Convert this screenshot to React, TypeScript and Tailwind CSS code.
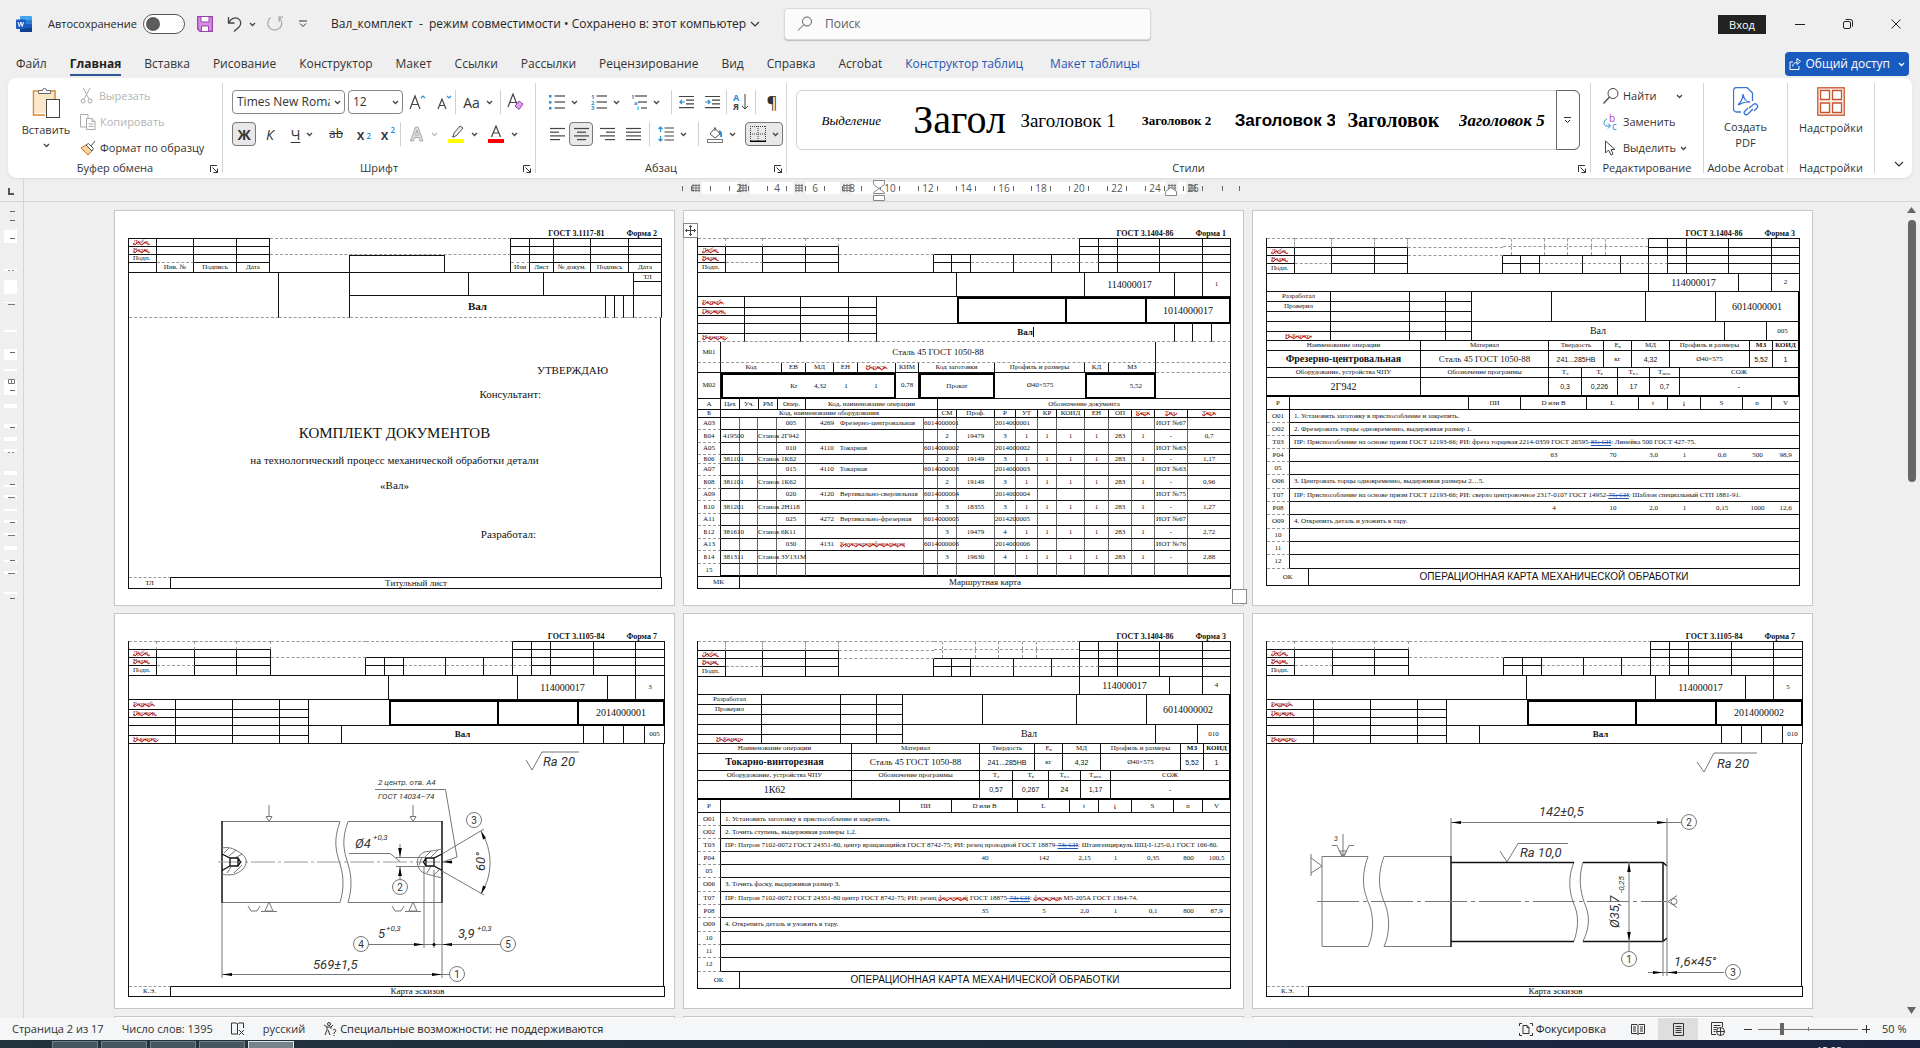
import React from 'react';
import clsx from 'clsx';

const UI = "font-['Open_Sans',sans-serif]";
const SERIF = "font-['Liberation_Serif',serif]";
const SANS = "font-['Liberation_Sans',sans-serif]";

/* ---------- small helpers ---------- */

function Svg({ w, h, children, className }: { w: number; h: number; children: React.ReactNode; className?: string }) {
  return (
    <svg width={w} height={h} viewBox={`0 0 ${w} ${h}`} fill="none" stroke="#444" strokeWidth="1" className={clsx('shrink-0', className)} aria-hidden="true">
      {children}
    </svg>
  );
}

function Chev({ color = '#444', className }: { color?: string; className?: string }) {
  return (
    <Svg w={7} h={5} className={className}>
      <path d="M1 1l2.5 2.5L6 1" stroke={color} strokeWidth="1.3" />
    </Svg>
  );
}

function Tool({ label, active, children, className }: { label: string; active?: boolean; children: React.ReactNode; className?: string }) {
  return (
    <button aria-label={label} className={clsx('flex h-6 items-center justify-center gap-1.5 rounded', active ? 'border border-[#777] bg-[#e8e8e8]' : '', className)}>
      {children}
    </button>
  );
}

const Sep = () => <span className="h-6 w-px shrink-0 bg-[#d0d0d0]" />;

/* ---------- title bar ---------- */

function TitleBar() {
  return (
    <header className="flex h-12 shrink-0 items-start text-[12px] text-[#262626]">
      <div className="flex h-12 w-[784px] items-center pl-4">
        <Svg w={16} h={16}>
          <rect x="4" y="0" width="12" height="16" rx="1" fill="#41a5ee" stroke="none" />
          <rect x="4" y="4" width="12" height="4" fill="#2b7cd3" stroke="none" />
          <rect x="4" y="8" width="12" height="4" fill="#185abd" stroke="none" />
          <rect x="4" y="12" width="12" height="4" fill="#103f91" stroke="none" />
          <rect x="0" y="3.5" width="9.5" height="9.5" rx="1" fill="#185abd" stroke="none" />
          <path d="M2 6l1.3 4.5L4.8 6l1.4 4.5L7.500 6" stroke="#fff" strokeWidth="1" />
        </Svg>
        <label htmlFor="autosave" className="ml-4 w-[95px] text-[11px]">Автосохранение</label>
        <span className="relative h-5 w-[42px]">
          <input id="autosave" type="checkbox" className="h-5 w-[42px] appearance-none rounded-full border border-[#555] bg-white" />
          <span className="absolute left-[3px] top-[3px] h-3.5 w-3.5 rounded-full bg-[#5c5c5c]" />
        </span>
        <button aria-label="Сохранить" className="ml-3">
          <Svg w={16} h={16}>
            <path d="M.7 .7h14.600v14.600H3L.7 13z" fill="#d58fe0" stroke="#9b3fae" strokeWidth="1.3" />
            <path d="M4 1v5h8V1M4.500 15v-5h7v5" fill="#fff" stroke="#9b3fae" />
          </Svg>
        </button>
        <button aria-label="Отменить" className="ml-3.5 flex items-center gap-1.5">
          <Svg w={16} h={16}>
            <path d="M1.500 1v6h6M1.800 6.500C4 2.500 8 1 11 2.500c3.500 2 3.500 6 1 8.500l-5 4.500" stroke="#444" strokeWidth="1.300" />
          </Svg>
          <Chev />
        </button>
        <button aria-label="Вернуть" className="ml-2.5">
          <Svg w={17} h={16}>
            <path d="M4.500 1.500a7 7 0 1 0 8.500 0M13 6V1.200h4" stroke="#a8a8a8" strokeWidth="1.200" />
          </Svg>
        </button>
        <button aria-label="Настройка панели быстрого доступа" className="ml-4">
          <Svg w={8} h={8}>
            <path d="M0 1h8M1 3.500l3 3 3-3" stroke="#333" />
          </Svg>
        </button>
        <button className="ml-6 flex items-center gap-1 whitespace-pre">
          <span>Вал_комплект  -  режим совместимости • Сохранено в: этот компьютер</span>
          <Svg w={10} h={6}>
            <path d="M1 1l4 4 4-4" stroke="#333" strokeWidth="1.2" />
          </Svg>
        </button>
      </div>
      <label className="mt-2 flex h-8 w-[367px] items-center rounded border border-[#d9d9d9] bg-[#fbfbfb] pl-3 shadow-[0_1px_1px_#bbb]">
        <Svg w={16} h={16}>
          <circle cx="10" cy="5.500" r="4.500" stroke="#555" />
          <path d="M6.800 8.700L1 14.500" stroke="#555" />
        </Svg>
        <input aria-label="Поиск" placeholder="Поиск" className="ml-3 w-full bg-transparent text-[12px] outline-none placeholder:text-[#616161]" />
      </label>
      <div className="ml-auto flex h-12 items-center pr-[19px]">
        <button className="mr-[29px] h-[19px] w-12 bg-[#222] text-[11px] leading-none text-white">Вход</button>
        <button aria-label="Свернуть" className="mr-[38px]"><Svg w={10} h={10}><path d="M0 5.500h10" stroke="#222" /></Svg></button>
        <button aria-label="Восстановить" className="mr-[38px]">
          <Svg w={10} h={10}><rect x=".5" y="2.500" width="7" height="7" rx="1.500" stroke="#222" /><path d="M2.500 .5h5a2 2 0 0 1 2 2v5" stroke="#222" /></Svg>
        </button>
        <button aria-label="Закрыть"><Svg w={10} h={10}><path d="M.5 .5l9 9M9.500 .5l-9 9" stroke="#222" /></Svg></button>
      </div>
    </header>
  );
}

const tabs = ['Файл', 'Главная', 'Вставка', 'Рисование', 'Конструктор', 'Макет', 'Ссылки', 'Рассылки', 'Рецензирование', 'Вид', 'Справка', 'Acrobat'];

function Tabs() {
  return (
    <nav className="flex h-[30px] shrink-0 items-center gap-[23px] pl-4 pr-[11px] pt-0.5 text-[12px] text-[#333]">
      {tabs.map(t => (
        <a key={t} href="#" className={clsx('flex h-6 items-center whitespace-nowrap', t === 'Главная' && 'border-b-2 border-[#2b579a] pt-0.5 font-bold text-[#222]')}>{t}</a>
      ))}
      <a href="#" className="text-[#1f56b3]">Конструктор таблиц</a>
      <a href="#" className="ml-1 text-[#1f56b3]">Макет таблицы</a>
      <button className="ml-auto flex h-6 items-center gap-1 rounded bg-[#185abd] px-1 text-[12px] text-white">
        <Svg w={12} h={12}>
          <path d="M4 4H1v7.500h9V8M3.500 8.500C4 5.500 6 4.500 8 4.500V6.500l3.500-3.200L8 .5v4" stroke="#fff" />
        </Svg>
        Общий доступ
        <Chev color="#fff" className="ml-1" />
      </button>
    </nav>
  );
}

/* ---------- ribbon ---------- */

function Launcher() {
  return (
    <button aria-label="Параметры" className="absolute bottom-0 right-1">
      <Svg w={8} h={8}><path d="M.5 7V.5H7M2.500 2.500l5 5M7.500 3.500v4h-4" stroke="#333" /></Svg>
    </button>
  );
}

function Group({ label, className, launcher, children }: { label: string; className: string; launcher?: boolean; children: React.ReactNode }) {
  return (
    <section className={clsx('relative my-[5px] flex shrink-0 flex-col border-r border-[#d4d4d4]', className)}>
      <div className="min-h-0 flex-1">{children}</div>
      <div className="relative h-3 whitespace-nowrap text-center text-[11px] leading-[14px] text-[#333]">
        {label}
        {launcher && <Launcher />}
      </div>
    </section>
  );
}

function Lines({ rows }: { rows: [number, number][] }) {
  return (
    <Svg w={15} h={14}>
      {rows.map(([a, b], i) => <path key={i} d={`M${a} ${1.5 + i * 3.7}H${b}`} stroke="#444" strokeWidth="1.2" />)}
    </Svg>
  );
}

function ListIcon({ kind }: { kind: 'dot' | 'num' | 'multi' }) {
  const blue = '#2a8dd4';
  return (
    <Svg w={16} h={16}>
      {kind === 'dot' && [2, 8, 14].map(y => <rect key={y} x="0" y={y - 1} width="2.500" height="2.500" fill={blue} stroke="none" />)}
      {kind !== 'dot' && ['1', kind === 'num' ? '2' : 'a', kind === 'num' ? '3' : 'i'].map((t, i) => (
        <text key={t} x={kind === 'multi' ? i * 3 : 0} y={5 + i * 5.5} fontSize="6" fontWeight="bold" fill={blue} stroke="none">{t}</text>
      ))}
      {[2, 8, 14].map((y, i) => <path key={y} d={`M${kind === 'multi' ? 4 + i * 3 : 5.5} ${y}H16`} stroke="#444" strokeWidth="1.200" />)}
    </Svg>
  );
}

const styles = [
  { t: 'Выделение', c: 'text-[13px] italic justify-center' },
  { t: 'Загол', c: 'text-[40px] justify-center' },
  { t: 'Заголовок 1', c: 'text-[19px] justify-center' },
  { t: 'Заголовок 2', c: 'text-[13px] font-bold justify-center' },
  { t: 'Заголовок 3', c: "text-[17px] font-bold font-['Liberation_Sans',sans-serif]" },
  { t: 'Заголовок', c: 'text-[20px] font-bold justify-center' },
  { t: 'Заголовок 5', c: 'text-[17px] font-bold italic justify-center' },
];

function Ribbon() {
  return (
    <div className="mx-2 flex h-[100px] shrink-0 rounded-lg bg-white text-[11px] text-[#333] shadow-[0_1px_2px_#d8d8d8]">
      <Group label="Буфер обмена" launcher className="w-[215px]">
        <div className="flex">
          <button className="ml-3 mt-1 flex w-[52px] flex-col items-center">
            <Svg w={29} h={31}>
              <path d="M6 4H1.500v24H13M18 4h5v8" stroke="#d9882b" strokeWidth="1.500" fill="none" />
              <path d="M3 5.500h19V12h-8v14H3z" fill="#fbe7c8" stroke="none" />
              <path d="M6.500 6.500v-3h4a2 2 0 0 1 4 0h4v3z" fill="#fff" stroke="#666" />
              <rect x="14.500" y="12.500" width="13" height="18" fill="#fff" stroke="#444" />
            </Svg>
            <span className="mt-1">Вставить</span>
            <Chev className="mt-1" />
          </button>
          <div className="ml-2 flex flex-col">
            <button disabled className="flex h-[26px] items-center gap-1.5 text-[#b5b5b5]">
              <Svg w={13} h={16}>
                <path d="M3 0l6 11M10 0L4 11" stroke="#aaa" />
                <circle cx="3" cy="13" r="2" stroke="#aaa" />
                <circle cx="10" cy="13" r="2" stroke="#aaa" />
              </Svg>
              Вырезать
            </button>
            <button disabled className="flex h-[26px] items-center gap-1 text-[#b5b5b5]">
              <Svg w={16} h={16}>
                <path d="M6 13H.5V.5H8V4M6.500 4.500H12l3 3v8H6.500zM12 4.500v3h3M8.500 10h5M8.500 12.500h5" stroke="#aaa" />
              </Svg>
              Копировать
            </button>
            <button className="flex h-[26px] items-center gap-1 whitespace-nowrap">
              <Svg w={16} h={16}>
                <path d="M1 8l5-3 6 6-4 4z" fill="#f9d39a" stroke="#d9771f" />
                <path d="M6 5l6 6 1.500-2.500L8.500 3.500zM11 6l4-5" stroke="#555" fill="#fff" />
              </Svg>
              Формат по образцу
            </button>
          </div>
        </div>
      </Group>

      <Group label="Шрифт" launcher className="w-[313px]">
        <div className="flex flex-col gap-2 pl-[9px] pt-[7px]">
          <div className="flex h-6 items-center">
            <span className="relative flex items-center">
              <select aria-label="Шрифт" className="h-6 w-[113px] appearance-none rounded border border-[#888] bg-white pl-1 pr-3.5 text-[12px]">
                <option>Times New Roman</option>
              </select>
              <Chev className="pointer-events-none absolute right-1" />
            </span>
            <span className="relative ml-[3px] flex items-center">
              <select aria-label="Размер шрифта" className="h-6 w-[55px] appearance-none rounded border border-[#888] bg-white pl-1 text-[12px]">
                <option>12</option>
              </select>
              <Chev className="pointer-events-none absolute right-1" />
            </span>
            <Tool label="Увеличить размер" className="ml-1.5 w-[18px]">
              <Svg w={18} h={18}><path d="M1 16L6 3l5 13M3 11.500h6.500" strokeWidth="1.200" /><path d="M12 5l2-2 2 2" stroke="#2a8dd4" strokeWidth="1.200" /></Svg>
            </Tool>
            <Tool label="Уменьшить размер" className="ml-2.5 w-[18px]">
              <Svg w={18} h={18}><path d="M1 16L5 6l4 10M2.500 12.500h5" strokeWidth="1.200" /><path d="M10 3l2 2 2-2" stroke="#2a8dd4" strokeWidth="1.200" /></Svg>
            </Tool>
            <Sep />
            <Tool label="Регистр" className="mx-1.5 w-8 text-[14px]">Aa<Chev /></Tool>
            <Sep />
            <Tool label="Очистить формат" className="ml-1.5 w-4">
              <Svg w={17} h={18}><path d="M1 14L6 1l5 13M3 9.500h6" strokeWidth="1.200" /><path d="M8 13l4-5 4 3-4 5.500z" fill="#dca5e5" stroke="#9b3fae" /></Svg>
            </Tool>
          </div>
          <div className="flex h-6 items-center text-[14px]">
            <Tool label="Полужирный" active className="w-6 font-bold">Ж</Tool>
            <Tool label="Курсив" className="ml-1 w-5 italic">К</Tool>
            <Tool label="Подчёркнутый" className="ml-1.5 w-8"><span className="underline underline-offset-2">Ч</span><Chev /></Tool>
            <Tool label="Зачёркнутый" className="ml-1.5 w-6 text-[12px] line-through">ab</Tool>
            <Tool label="Подстрочный" className="ml-1 w-6 font-semibold">x<sub className="-ml-1 text-[8px] text-[#2a8dd4]">2</sub></Tool>
            <Tool label="Надстрочный" className="w-6 font-semibold">x<sup className="-ml-1 text-[8px] text-[#2a8dd4]">2</sup></Tool>
            <Sep />
            <Tool label="Текстовые эффекты" className="ml-1.5 w-8">
              <Svg w={16} h={16}><path d="M1.500 15L6.500 1h2.500l5 14h-3l-1-3.500H5.500l-1 3.500zM6.500 9h3L8 4z" fill="#ddd" stroke="#aaa" /></Svg>
              <Chev color="#bbb" />
            </Tool>
            <Tool label="Цвет выделения" className="ml-2 w-8">
              <Svg w={17} h={18}><path d="M5 12l1-4 6-7 3 2-6 7-3 2zM4 12l2-2" stroke="#555" fill="#eee" /><rect x="0" y="14" width="16" height="4" fill="#ff0" stroke="none" /></Svg>
              <Chev />
            </Tool>
            <Tool label="Цвет текста" className="ml-2 w-8">
              <Svg w={17} h={18}><path d="M3.500 12l4.500-11 4.500 11M5 8h6" strokeWidth="1.200" /><rect x="0" y="14" width="16" height="4" fill="#f00" stroke="none" /></Svg>
              <Chev />
            </Tool>
          </div>
        </div>
      </Group>

      <Group label="Абзац" launcher className="w-[251px]">
        <div className="flex flex-col gap-2 pl-[11px] pt-[7px]">
          <div className="flex h-6 items-center">
            <Tool label="Маркеры" className="w-8"><ListIcon kind="dot" /><Chev /></Tool>
            <Tool label="Нумерация" className="ml-2.5 w-8"><ListIcon kind="num" /><Chev /></Tool>
            <Tool label="Многоуровневый список" className="ml-2 mr-2.5 w-8"><ListIcon kind="multi" /><Chev /></Tool>
            <Sep />
            <Tool label="Уменьшить отступ" className="ml-1.5 w-4">
              <Svg w={15} h={14}><path d="M0 1.500h15M7 5.200h8M7 8.900h8M0 12.600h15" strokeWidth="1.200" /><path d="M6 7H1m2-2L1 7l2 2" stroke="#2a8dd4" strokeWidth="1.200" /></Svg>
            </Tool>
            <Tool label="Увеличить отступ" className="ml-2.5 mr-1.5 w-4">
              <Svg w={15} h={14}><path d="M0 1.500h15M7 5.200h8M7 8.900h8M0 12.600h15" strokeWidth="1.200" /><path d="M0 7h5M3 5l2 2-2 2" stroke="#2a8dd4" strokeWidth="1.200" /></Svg>
            </Tool>
            <Sep />
            <Tool label="Сортировка" className="mx-1.5 w-4">
              <Svg w={16} h={18}>
                <text x="0" y="8" fontSize="9" fontWeight="bold" fill="#2a8dd4" stroke="none">А</text>
                <text x="0" y="17" fontSize="9" fontWeight="bold" fill="#444" stroke="none">Я</text>
                <path d="M12 1v15M9 13l3 3 3-3" />
              </Svg>
            </Tool>
            <Sep />
            <Tool label="Все знаки" className="ml-2 w-4 text-[17px]">¶</Tool>
          </div>
          <div className="flex h-6 items-center">
            <Tool label="По левому краю" className="w-5"><Lines rows={[[0, 15], [0, 9], [0, 15], [0, 10]]} /></Tool>
            <Tool label="По центру" active className="ml-0.5 w-6"><Lines rows={[[0, 15], [3, 12], [0, 15], [3, 12]]} /></Tool>
            <Tool label="По правому краю" className="ml-1.5 w-4"><Lines rows={[[0, 15], [6, 15], [0, 15], [5, 15]]} /></Tool>
            <Tool label="По ширине" className="ml-2.5 mr-2 w-4"><Lines rows={[[0, 15], [0, 15], [0, 15], [0, 15]]} /></Tool>
            <Sep />
            <Tool label="Интервал" className="ml-1.5 mr-2.5 w-8">
              <Svg w={16} h={16}><path d="M6.500 2H16M6.500 6H16M6.500 10H16M6.500 14H16" strokeWidth="1.200" /><path d="M2.500 1v5M.5 3l2-2 2 2M2.500 10v5M.5 13l2 2 2-2" stroke="#2a8dd4" strokeWidth="1.200" /></Svg>
              <Chev />
            </Tool>
            <Sep />
            <Tool label="Заливка" className="ml-1.5 w-8">
              <Svg w={16} h={17}><path d="M3 8l5-6 5 6-5 4zM8 5V1" stroke="#555" /><path d="M12 5c2 1 2.500 3 2 6" stroke="#2a8dd4" strokeWidth="2" /><rect x=".5" y="13.500" width="15" height="3" fill="#fff" stroke="#777" /></Svg>
              <Chev />
            </Tool>
            <Tool label="Границы" active className="ml-2 w-[38px]">
              <Svg w={16} h={16}><path d="M.5 0v15M8 0v15M15.500 0v15M0 .5h16M0 8h16" strokeDasharray="1 1" /><path d="M0 15.300h16" stroke="#000" strokeWidth="1.500" /></Svg>
              <Chev />
            </Tool>
          </div>
        </div>
      </Group>

      <Group label="Стили" launcher className="min-w-0 flex-1">
        <div className={clsx('ml-[9px] mr-2.5 mt-[7px] flex h-[60px] rounded-md border border-[#d0d0d0] text-black', SERIF)}>
          {styles.map(s => (
            <button key={s.t} className={clsx('flex min-w-0 flex-1 items-center px-1 leading-none', s.c)}>
              <span className="overflow-hidden whitespace-nowrap py-1">{s.t}</span>
            </button>
          ))}
          <button aria-label="Другие стили" className="-my-px -mr-px flex w-6 shrink-0 items-center justify-center rounded-r-md border border-[#666]">
            <Svg w={7} h={7}><path d="M0 .5h7M1 3l2.500 2.500L6 3" stroke="#333" /></Svg>
          </button>
        </div>
      </Group>

      <Group label="Редактирование" className="w-[113px]">
        <div className="flex flex-col pl-3">
          <button className="flex h-[26px] items-center gap-1">
            <Svg w={16} h={16}><circle cx="10" cy="5.500" r="5" /><path d="M6.500 9L.5 15.500" strokeWidth="1.200" /></Svg>
            Найти<Chev className="ml-4" />
          </button>
          <button className="flex h-[26px] items-center gap-1">
            <Svg w={16} h={17}>
              <text x="6" y="8" fontSize="10" fill="#b146c2" stroke="none">b</text>
              <text x="9" y="16" fontSize="10" fill="#2a8dd4" stroke="none">c</text>
              <path d="M4 5C0 7 0 12 4 12h3M5 9.500L7.500 12 5 14.500" stroke="#2a8dd4" />
            </Svg>
            Заменить
          </button>
          <button className="flex h-[26px] items-center gap-1">
            <Svg w={16} h={16}><path d="M2.500 1v12l3-3 2.500 5 2-1-2-4.500h4z" /></Svg>
            Выделить<Chev />
          </button>
        </div>
      </Group>

      <Group label="Adobe Acrobat" className="w-[84px]">
        <button className="mx-auto flex flex-col items-center pt-1 leading-4">
          <Svg w={26} h={30}>
            <path d="M8 25H3.500a3 3 0 0 1-3-3V3.500a3 3 0 0 1 3-3H14L19.500 6v8M5 18c4-4 5-8 5-11 1 6 3 8 7 8-5-1-8 1-12 3" stroke="#3b73d9" strokeWidth="1.300" />
            <path d="M16 21l5-4c2-1 5 2 3 4l-3 3M20 22l-5 5c-3 2-5-1-3-3l3-3" stroke="#3b73d9" strokeWidth="1.300" />
          </Svg>
          <span className="mt-0.5">Создать</span>
          <span>PDF</span>
        </button>
      </Group>

      <Group label="Надстройки" className="w-[87px]">
        <button className="mx-auto flex flex-col items-center pt-1 leading-4">
          <Svg w={28} h={29}>
            <g stroke="#c8532a" strokeWidth="1.300">
              <rect x=".8" y=".8" width="26.400" height="27.400" fill="#fdf3ee" />
              <path d="M3.500 3.500h9v9h-9zM15.500 3.500h9v9h-9zM3.500 16h9v9.500h-9zM15.500 16h9v9.500h-9z" fill="#fff" />
            </g>
          </Svg>
          <span className="mt-1">Надстройки</span>
        </button>
      </Group>

      <button aria-label="Свернуть ленту" className="ml-[19px] mr-2 self-end pb-[11px]">
        <Svg w={10} h={6}><path d="M1 1l4 4 4-4" stroke="#333" strokeWidth="1.200" /></Svg>
      </button>
    </div>
  );
}

/* ---------- rulers ---------- */

const columnMarks = [14, 61, 117, 165, 490, 510];
const numbers = [2, 4, 6, 8, 10, 12, 14, 16, 18, 20, 22, 24, 26];

function Ruler() {
  return (
    <div className="flex h-6 shrink-0 border-b border-[#d5d5d5]">
      <div className="w-6 border-r border-[#d5d5d5] pl-2 pt-2.5">
        <Svg w={6} h={7}><path d="M1 0v6h5" stroke="#555" strokeWidth="2" /></Svg>
      </div>
      <svg width="560" height="23" viewBox="0 0 560 23" className="ml-[658px]">
        <path d="M19 4h493v12H19z" fill="#fff" />
        {[8, 56, 111, 158, 484, 504].map(x => <path key={x} d={`M${x} 4h12v12H${x}z`} fill="#efefef" />)}
        <path d="M.5 8v5M9.500 8v5M28.500 8v5M540.500 8v5M557.500 8v5" stroke="#666" />
        {numbers.map(n => {
          const x = Math.round(57 + (n - 2) * 18.9);
          return (
            <g key={n}>
              <path d={`M${x - 9.5} 8v5M${x + 9.5} 8v5`} stroke="#666" />
              <text x={x} y="14" fontSize="10" textAnchor="middle" fill="#555">{n}</text>
            </g>
          );
        })}
        {columnMarks.map(x => (
          <path key={x} d={`M${x - 3} 6v8M${x} 6v8M${x + 3} 6v8M${x - 4} 7.500h8M${x - 4} 10h8M${x - 4} 12.500h8`} stroke="#777" />
        ))}
        <path d="M191.500 2.500h11v4l-5.500 4-5.500-4zM191.500 15.500v-1l5.500-4 5.500 4v1zM191.500 17.500h11v5h-11z" fill="#fff" stroke="#888" />
        <path d="M483.500 17.500v-4l5.500-4 5.500 4v4z" fill="#fff" stroke="#888" />
      </svg>
    </div>
  );
}

const vBlocks = [[28, 13], [67, 2], [78, 14], [100, 1], [128, 2], [147, 11], [167, 2], [178, 15], [202, 4], [222, 4], [235, 4], [247, 3], [269, 4], [283, 2], [293, 3], [307, 2], [318, 3], [331, 2], [344, 4], [358, 2], [369, 3], [390, 2]];
const vTicks = [9, 18, 36, 102, 150, 188, 225, 282, 320, 358, 396];

function VerticalRuler() {
  return (
    <div className="w-6 shrink-0 border-r border-[#d5d5d5]">
      <svg width="20" height="480" viewBox="0 0 20 480">
        {vBlocks.map(([y, h]) => <rect key={y} x="4" y={y} width="13" height={h} fill="#fff" />)}
        {vTicks.map(y => <path key={y} d={`M10 ${y + 0.5}h5`} stroke="#666" />)}
        <path d="M8 68.500h7M8 250.500h7" stroke="#888" strokeDasharray="2 2" />
        <path d="M8 295.500h7M8 333.500h7M8 371.500h7M8 102.500h7" stroke="#777" />
        <path d="M8.500 177.500h6v4h-6zM11.500 177.500v4" stroke="#777" fill="none" />
      </svg>
    </div>
  );
}

/* ---------- form tables ---------- */

type Cell = { t?: React.ReactNode; s?: number; r?: number; b?: string; c?: string };
type Row = { h: number; cells: (Cell | string)[] };

// lower case = solid side, upper case = dashed side
const edge: Record<string, string> = {
  t: '[border-top:1px_solid_#111]',
  r: '[border-right:1px_solid_#111]',
  b: '[border-bottom:1px_solid_#111]',
  T: '[border-top:1px_dashed_#999]',
  R: '[border-right:1px_dashed_#999]',
  B: '[border-bottom:1px_dashed_#999]',
  g: '[border-right:1px_solid_#666]',
  // heavy boxes: O has four sides, Q shares its left side with the box before it
  O: '[border:2px_solid_#000]',
  Q: '[border-block:2px_solid_#000] [border-right:2px_solid_#000]',
  w: '[border-right:2px_solid_#000]',
  v: '[border-bottom:2px_solid_#000]',
  u: '[border-block:2px_solid_#000]',
  l: '[border-left:2px_solid_#000]',
};

function Band({ cols, rows }: { cols: number[]; rows: Row[] }) {
  return (
    <table className="table-fixed border-separate border-spacing-0 border-l border-[#111]" style={{ width: cols[cols.length - 1] }}>
      <colgroup>
        {cols.map((x, i) => <col key={i} style={{ width: x - (i ? cols[i - 1] : 0) }} />)}
      </colgroup>
      <tbody>
        {rows.map((row, i) => (
          <tr key={i} style={{ height: row.h }}>
            {row.cells.map((raw, j) => {
              const cell: Cell = typeof raw === 'string' ? { t: raw } : raw;
              const sides = (cell.b ?? 'rb').split('').map(k => edge[k]);
              return (
                <td key={j} colSpan={cell.s} rowSpan={cell.r} className={clsx('p-0 align-middle whitespace-nowrap', sides, cell.c ?? 'text-center')}>
                  {cell.t}
                </td>
              );
            })}
          </tr>
        ))}
      </tbody>
    </table>
  );
}

const Typo = ({ children }: { children: React.ReactNode }) => (
  <span className="text-[#8c1a1a] underline decoration-[#d00000] decoration-wavy decoration-1 [text-underline-offset:-3px] [text-decoration-skip-ink:none]">{children}</span>
);

const Gram = ({ children }: { children: React.ReactNode }) => (
  <span className="text-[#2458b8] decoration-[#2458b8] [text-decoration-line:underline_line-through] [text-decoration-skip-ink:none]">{children}</span>
);

const big = 'text-center text-[10px]';
const mid = 'text-center text-[9px]';
const leftText = 'pl-1 text-left';
const e = (n: number, b = 'rb'): Cell[] => Array.from({ length: n }, () => ({ b }));

function Page({ gost, form, children }: { gost: string; form: string; children: React.ReactNode }) {
  return (
    <article className={clsx('relative h-[396px] w-[561px] shrink-0 border border-[#c6c6c6] bg-white pl-[13px] text-[7px] leading-none text-[#111]', SERIF)}>
      <div className="flex h-[27px] items-end justify-end gap-[22px] pr-[17px] text-[8px] font-bold">
        <span>{gost}</span>
        <span>{form}</span>
      </div>
      {children}
    </article>
  );
}

const topNarrow = [28, 65, 108, 141, 236, 254, 273, 316, 354, 382, 401, 420, 462, 505, 533];
const topWide = [28, 66, 108, 142, 237, 256, 275, 317, 355, 384, 403, 422, 465, 507, 536];

function DashedCells() {
  return (
    <div className="flex h-4 flex-col">
      {[0, 1].map(i => (
        <div key={i} className={clsx('flex h-2', i === 0 && '[border-bottom:1px_dashed_#999]')}>
          {[9, 33, 23, 24, 14].map(w => <span key={w} className="[border-right:1px_dashed_#999]" style={{ width: w }} />)}
        </div>
      ))}
    </div>
  );
}

function TopGrid({ wide, dashed }: { wide?: boolean; dashed?: boolean }) {
  return (
    <Band
      cols={wide ? topWide : topNarrow}
      rows={[
        {
          h: 9,
          cells: [
            ...e(4, 'TRb'),
            { r: 2, b: 'TB', t: dashed && <div className="[border-bottom:1px_dashed_#999]" /> },
            { r: 2, s: 5, b: 'Tbr', t: dashed && <DashedCells /> },
            ...e(5, 'trb'),
          ],
        },
        { h: 8, cells: [{ t: <Typo>Дубл.</Typo>, c: leftText }, ...e(3), ...e(5)] },
        {
          h: 8,
          cells: [{ t: <Typo>Взам.</Typo>, c: leftText }, { b: 'rB' }, ...e(2), { r: 2 }, ...e(2), ...e(4, 'rB'), ...e(4)],
        },
        { h: 10, cells: [{ t: 'Подп.', c: leftText }, ...e(3), ...e(10)] },
      ]}
    />
  );
}

/* page 1 */
function TitlePage() {
  return (
    <Page gost="ГОСТ 3.1117-81" form="Форма 2">
      <Band
        cols={[28, 65, 108, 141, 221, 316, 382, 401, 425, 462, 500, 533]}
        rows={[
          { h: 9, cells: [{ t: <Typo>Дубл.</Typo>, c: leftText, b: 'trb' }, ...e(3, 'trb'), { s: 3, r: 2, b: 'TBr' }, ...e(5, 'trb')] },
          { h: 8, cells: [{ t: <Typo>Взам.</Typo>, c: leftText }, ...e(3), ...e(5)] },
          { h: 8, cells: [{ t: 'Подп.', c: leftText }, { b: 'rB' }, ...e(2), { r: 2 }, { r: 2, b: 'trb' }, { r: 2 }, { b: 'rB' }, ...e(4)] },
          { h: 10, cells: ['', 'Инв. №', 'Подпись', 'Дата', 'Изм', 'Лист', '№ докум.', 'Подпись', 'Дата'] },
        ]}
      />
      <Band
        cols={[150, 221, 340, 415, 477, 486, 495, 505, 533]}
        rows={[
          { h: 9, cells: [{ r: 3, b: 'rB' }, { r: 3, b: 'rB' }, { r: 2 }, { r: 2 }, { r: 2, s: 4 }, 'ТЛ'] },
          { h: 14, cells: [''] },
          { h: 22, cells: [{ t: 'Вал', s: 3, b: 'rB', c: 'text-center text-[11px] font-bold' }, ...e(4, 'rB')] },
        ]}
      />
      <div className="flex h-[259px] w-[533px] flex-col border-x border-[#111] text-[11px] leading-4">
        <p className="mt-[44px] pr-[52px] text-right">УТВЕРЖДАЮ</p>
        <p className="mt-2 pr-[119px] text-right">Консультант:</p>
        <p className="mt-[23px] text-center text-[15px]">КОМПЛЕКТ ДОКУМЕНТОВ</p>
        <p className="mt-[11px] text-center">на технологический процесс механической обработки детали</p>
        <p className="mt-[9px] text-center">«Вал»</p>
        <p className="mt-[33px] pr-[124px] text-right">Разработал:</p>
      </div>
      <Band cols={[42, 533]} rows={[{ h: 12, cells: [{ t: 'ТЛ', b: 'Trb' }, { t: 'Титульный лист', b: 'trb', c: mid }] }]} />
    </Page>
  );
}

/* page 2 */
const ops = [
  { a: 'А03', op: '005', code: '4269', name: 'Фрезерно-центровальная', n: '6014000001', doc: '2014000001', iot: 'ИОТ №67', b: 'Б04', eq: '419500', m: '2Г942', v: ['2', '19479', '3', '0,7'] },
  { a: 'А05', op: '010', code: '4110', name: 'Токарная', n: '6014000002', doc: '2014000002', iot: 'ИОТ №63', b: 'Б06', eq: '381101', m: '1К62', v: ['2', '19149', '3', '1,17'] },
  { a: 'А07', op: '015', code: '4110', name: 'Токарная', n: '6014000003', doc: '2014000003', iot: 'ИОТ №63', b: 'Б08', eq: '381101', m: '1К62', v: ['2', '19149', '3', '0,96'] },
  { a: 'А09', op: '020', code: '4120', name: 'Вертикально-сверлильная', n: '6014000004', doc: '2014000004', iot: 'ИОТ №75', b: 'Б10', eq: '381201', m: '2Н118', v: ['3', '18355', '3', '1,27'] },
  { a: 'А11', op: '025', code: '4272', name: 'Вертикально-фрезерная', n: '6014000005', doc: '2014200005', iot: 'ИОТ №67', b: 'Б12', eq: '381610', m: '6К11', v: ['3', '19479', '4', '2,72'] },
  { a: 'А13', op: '030', code: '4131', name: 'Круглошлифовальная', n: '6014000006', doc: '2014000006', iot: 'ИОТ №76', b: 'Б14', eq: '381311', m: '3У131М', v: ['3', '19630', '4', '2,88'] },
];
const routeCols = [23, 42, 60, 79, 108, 226, 240, 259, 297, 318, 340, 359, 387, 411, 434, 457, 490, 533];
const blankCols = [23, 84, 108, 136, 160, 198, 221, 297, 387, 411, 458, 533];

function RoutePage() {
  return (
    <Page gost="ГОСТ 3.1404-86" form="Форма 1">
      <TopGrid />
      <Band cols={[259, 387, 477, 505, 533]} rows={[{ h: 24, cells: ['', '', { t: '114000017', c: big }, '', '1'] }]} />
      <Band
        cols={[47, 103, 151, 179, 259, 369, 449, 533]}
        rows={[
          { h: 11, cells: [{ t: <Typo>Разраб.</Typo>, c: leftText }, ...e(3), { r: 3, b: 'b' }, { r: 3, b: 'O' }, { r: 3, b: 'Q' }, { r: 3, b: 'Q', t: '1014000017', c: big }] },
          { h: 8, cells: [{ t: <Typo>Провер.</Typo>, c: leftText }, ...e(3)] },
          { h: 8, cells: e(4) },
        ]}
      />
      <Band
        cols={[47, 103, 151, 179, 477, 495, 514, 533]}
        rows={[
          { h: 10, cells: [...e(4), { r: 2, b: 'rB', t: <span className="border-r border-black">Вал</span>, c: 'text-center text-[9px] font-bold' }, ...e(3, 'rB').map(c => ({ ...c, r: 2 }))] },
          { h: 8, cells: [{ t: <Typo>Н.контр.</Typo>, c: leftText, b: 'rB' }, ...e(3, 'rB')] },
        ]}
      />
      <Band cols={[23, 458, 533]} rows={[{ h: 21, cells: [{ t: 'М01', b: 'rB' }, { t: 'Сталь 45 ГОСТ 1050-88', c: mid, b: 'rB' }, { b: 'rB' }] }]} />
      <Band
        cols={blankCols}
        rows={[
          { h: 10, cells: ['', 'Код', 'ЕВ', 'МД', 'ЕН', { t: <Typo>Н.расх.</Typo> }, 'КИМ', 'Код заготовки', 'Профиль и размеры', 'КД', 'МЗ', { b: 'rB' }] },
          {
            h: 26,
            cells: [
              'М02',
              { b: 'ul' }, { t: 'Кг', b: 'u' }, { t: '4,32', b: 'u' }, { t: '1', b: 'u' }, { t: '1', b: 'uw' },
              '0,78',
              { t: 'Прокат', b: 'O' },
              { t: 'Ø40×575', b: 'b' },
              { t: '5,52', s: 2, b: 'O', c: 'text-right pr-3' },
              '',
            ],
          },
        ]}
      />
      <Band cols={[23, 42, 61, 80, 108, 240, 533]} rows={[{ h: 11, cells: ['А', 'Цех', 'Уч.', 'РМ', 'Опер.', 'Код, наименование операции', 'Обозначение документа'] }]} />
      <Band
        cols={[23, 240, 259, 297, 318, 340, 359, 387, 411, 434, 457, 490, 533]}
        rows={[{ h: 8, cells: ['Б', 'Код, наименование оборудования', 'СМ', 'Проф.', 'Р', 'УТ', 'КР', 'КОИД', 'ЕН', 'ОП', { t: <Typo>Кшт.</Typo> }, { t: <Typo>Тпз.</Typo> }, { t: <Typo>Тшт.</Typo> }] }]}
      />
      <Band
        cols={routeCols}
        rows={[
          ...ops.flatMap((o, i): Row[] => [
            {
              h: 12,
              cells: [
                { t: o.a, b: 'rB' }, ...e(3, 'gb'), { t: o.op, b: 'gb' },
                { t: <><span className="ml-3.5 mr-1.5">{o.code}</span>{i === 5 ? <Typo>{o.name}</Typo> : o.name}</>, b: 'gb', c: 'text-left' },
                { t: o.n, b: 'gb', c: 'text-left' }, ...e(2, 'gb'),
                { t: o.doc, b: 'gb', c: 'text-left' }, ...e(6, 'gb'),
                { t: o.iot, b: 'gb' }, '',
              ],
            },
            {
              h: i === 1 ? 9 : 13,
              cells: [
                { t: o.b, b: 'rB' }, { t: o.eq, b: 'gb', c: 'text-left pl-0.5' }, { b: 'gb' }, { t: 'Станок', b: 'gb', c: 'text-left' }, { t: o.m, b: 'gb', c: 'text-left pl-1' },
                { b: 'gb' }, { b: 'gb' }, { t: o.v[0], b: 'gb' }, { t: o.v[1], b: 'gb' }, { t: o.v[2], b: 'gb' },
                ...['1', '1', '1', '1', '283', '1', '-'].map((t): Cell => ({ t, b: 'gb' })), o.v[3],
              ],
            },
          ]),
          { h: 13, cells: [{ t: '15' }, ...e(16, 'gv'), { b: 'rv' }] },
        ]}
      />
      <Band cols={[42, 533]} rows={[{ h: 12, cells: ['МК', { t: 'Маршрутная карта', c: mid }] }]} />
      <button aria-label="Выделить таблицу" className="absolute -left-px top-[12px] flex h-[15px] w-[15px] items-center justify-center border border-[#888] bg-white">
        <Svg w={11} h={11}><path d="M5.500 .5v10M.5 5.500h10M4 2l1.500-1.500L7 2M4 9l1.500 1.500L7 9M2 4L.5 5.500 2 7M9 4l1.500 1.500L9 7" stroke="#444" /></Svg>
      </button>
      <span className="absolute -right-1 bottom-[1px] h-[15px] w-[15px] border border-[#888] bg-white" />
    </Page>
  );
}

/* pages 3 and 5 */
type OpData = {
  no: string; code: string; opNo: string; name: string; machine: string; times: string[];
  lines: { id: string; h: number; t?: React.ReactNode; v?: string[] }[];
};

const Sub = ({ children }: { children: React.ReactNode }) => <sub className="text-[4px] leading-none">{children}</sub>;

function OperationPage({ d }: { d: OpData }) {
  const sans = clsx('text-center text-[7px]', SANS);
  return (
    <Page gost="ГОСТ 3.1404-86" form="Форма 3">
      <TopGrid dashed />
      <Band cols={[382, 472, 505, 533]} rows={[{ h: 18, cells: ['', { t: '114000017', c: big }, '', d.no] }]} />
      <Band
        cols={[64, 143, 179, 205, 285, 379, 449, 533]}
        rows={[
          { h: 10, cells: ['Разработал', ...e(3), { r: 3 }, { r: 3 }, { r: 3 }, { r: 3, t: d.code, c: big, b: 'wb' }] },
          { h: 10, cells: ['Проверил', ...e(3)] },
          { h: 10, cells: e(4) },
        ]}
      />
      <Band
        cols={[64, 143, 179, 205, 458, 500, 533]}
        rows={[
          { h: 10, cells: [...e(4), { r: 2, t: 'Вал', c: big }, { r: 2 }, { r: 2, t: d.opNo, b: 'wb' }] },
          { h: 9, cells: [{ t: <Typo>Н.Контр.</Typo> }, ...e(3)] },
        ]}
      />
      <Band
        cols={[154, 282, 337, 365, 403, 483, 506, 533]}
        rows={[
          { h: 10, cells: ['Наименование операции', 'Материал', 'Твердость', { t: <>Е<Sub>в</Sub></> }, 'МД', 'Профиль и размеры', { t: 'МЗ', c: 'text-center font-bold' }, { t: 'КОИД', b: 'wb', c: 'text-center font-bold' }] },
          { h: 17, cells: [{ t: d.name, c: 'text-center text-[10px] font-bold' }, { t: 'Сталь 45 ГОСТ 1050-88', c: mid }, { t: '241...285НВ', c: sans }, 'кг', { t: '4,32', c: sans }, 'Ø40×575', { t: '5,52', c: sans }, { t: '1', b: 'wb', c: sans }] },
        ]}
      />
      <Band
        cols={[154, 282, 315, 351, 383, 413, 533]}
        rows={[
          {
            h: 10,
            cells: [
              'Оборудование, устройства ЧПУ', 'Обозначение программы',
              ...['о', 'в', 'п.з.', 'шт.к.'].map((s): Cell => ({ t: <>Т<Sub>{s}</Sub></> })),
              { t: 'СОЖ', b: 'wb' },
            ],
          },
          { h: 19, cells: [{ t: d.machine, c: big, b: 'rv' }, { b: 'rv' }, ...d.times.map((t): Cell => ({ t, c: sans, b: 'rv' })), { t: '-', b: 'wv', c: sans }] },
        ]}
      />
      <Band
        cols={[23, 202, 254, 320, 372, 401, 434, 476, 505, 533]}
        rows={[
          { h: 13, cells: ['Р', '', 'ПИ', 'D или В', 'L', 't', { t: <Typo>i</Typo> }, 'S', 'n', 'V'] },
          ...d.lines.map((l): Row => ({
            h: l.h,
            cells: l.v
              ? [{ t: l.id, b: 'rB' }, { b: 'b' }, { b: 'b' }, ...l.v.map((t, i): Cell => ({ t, b: i === l.v!.length - 1 ? 'rb' : 'b' }))]
              : [{ t: l.id, b: 'rB' }, { t: l.t, s: 9, c: leftText }],
          })),
        ]}
      />
      <Band cols={[42, 533]} rows={[{ h: 17, cells: ['ОК', { t: 'ОПЕРАЦИОННАЯ КАРТА МЕХАНИЧЕСКОЙ ОБРАБОТКИ', c: clsx(big, SANS) }] }]} />
    </Page>
  );
}

const op005: OpData = {
  no: '2', code: '6014000001', opNo: '005', name: 'Фрезерно-центровальная', machine: '2Г942', times: ['0,3', '0,226', '17', '0,7'],
  lines: [
    { id: 'О01', h: 13, t: '1. Установить заготовку в приспособление и закрепить.' },
    { id: 'О02', h: 13, t: '2. Фрезеровать торцы одновременно, выдерживая размер 1.' },
    { id: 'Т03', h: 13, t: <>ПР: Приспособление на основе призм ГОСТ 12193-66; РИ: фреза торцевая 2214-0359 ГОСТ 26595-<Gram>85; СИ</Gram>: Линейка 500 ГОСТ 427-75.</> },
    { id: 'Р04', h: 13, v: ['63', '70', '3,0', '1', '0,6', '500', '98,9'] },
    { id: '05', h: 13 },
    { id: 'О06', h: 14, t: '3. Центровать торцы одновременно, выдерживая размеры 2…5.' },
    { id: 'Т07', h: 13, t: <>ПР: Приспособление на основе призм ГОСТ 12193-66; РИ: сверло центровочное 2317-0107 ГОСТ 14952-<Gram>75; СИ</Gram>: Шаблон специальный СТП 1881-91.</> },
    { id: 'Р08', h: 13, v: ['4', '10', '2,0', '1', '0,15', '1000', '12,6'] },
    { id: 'О09', h: 14, t: '4. Открепить деталь и уложить в тару.' },
    { id: '10', h: 13 },
    { id: '11', h: 13 },
    { id: '12', h: 14 },
  ],
};

const op010: OpData = {
  no: '4', code: '6014000002', opNo: '010', name: 'Токарно-винторезная', machine: '1К62', times: ['0,57', '0,267', '24', '1,17'],
  lines: [
    { id: 'О01', h: 13, t: '1. Установить заготовку в приспособление и закрепить.' },
    { id: 'О02', h: 13, t: '2. Точить ступень, выдерживая размеры 1,2.' },
    { id: 'Т03', h: 13, t: <>ПР: Патрон 7102-0072 ГОСТ 24351-80, центр вращающийся ГОСТ 8742-75; РИ: резец проходной ГОСТ 18879-<Gram>73; СИ</Gram>: Штангенциркуль ШЦ-I-125-0,1 ГОСТ 166-80.</> },
    { id: 'Р04', h: 13, v: ['40', '142', '2,15', '1', '0,35', '800', '100,5'] },
    { id: '05', h: 13 },
    { id: 'О06', h: 14, t: '3. Точить фаску, выдерживая размер 3.' },
    { id: 'Т07', h: 13, t: <>ПР: Патрон 7102-0072 ГОСТ 24351-80 центр ГОСТ 8742-75; РИ: резец <Typo>фасочный</Typo> ГОСТ 18875-<Gram>73; СИ</Gram>: <Typo>фаскомер</Typo> М5-205А ГОСТ 1364-74.</> },
    { id: 'Р08', h: 13, v: ['35', '5', '2,0', '1', '0,1', '800', '87,9'] },
    { id: 'О09', h: 14, t: '4. Открепить деталь и уложить в тару.' },
    { id: '10', h: 13 },
    { id: '11', h: 13 },
    { id: '12', h: 14 },
  ],
};

/* pages 4 and 6 */
function SketchPage({ no, code, opNo, children }: { no: string; code: string; opNo: string; children: React.ReactNode }) {
  return (
    <Page gost="ГОСТ 3.1105-84" form="Форма 7">
      <TopGrid wide />
      <Band cols={[260, 389, 479, 507, 536]} rows={[{ h: 24, cells: ['', '', { t: '114000017', c: big }, '', no] }]} />
      <Band
        cols={[47, 104, 151, 180, 260, 370, 450, 536]}
        rows={[
          { h: 10, cells: [{ t: <Typo>Разраб.</Typo>, c: leftText }, ...e(3), { r: 3, b: 'b' }, { r: 3, b: 'O' }, { r: 3, b: 'Q' }, { r: 3, b: 'Q', t: code, c: big }] },
          { h: 8, cells: [{ t: <Typo>Провер.</Typo>, c: leftText }, ...e(3)] },
          { h: 8, cells: e(4) },
        ]}
      />
      <Band
        cols={[47, 104, 151, 180, 213, 455, 475, 495, 516, 536]}
        rows={[
          { h: 10, cells: [...e(4), { r: 2 }, { r: 2, t: 'Вал', c: 'text-center text-[9px] font-bold' }, { r: 2 }, { r: 2 }, { r: 2 }, { r: 2, t: opNo }] },
          { h: 8, cells: [{ t: <Typo>Н.контр.</Typo>, c: leftText }, ...e(3)] },
        ]}
      />
      <div className="h-[242px] w-[536px] border-x border-[#111]">
        <svg width="534" height="242" viewBox="0 0 534 242" fill="none" stroke="#777" strokeWidth="1" fontStyle="italic" className="font-['Roboto',sans-serif]">
          {children}
        </svg>
      </div>
      <Band cols={[42, 536]} rows={[{ h: 11, cells: [{ t: 'К.Э.', b: 'Trb' }, { t: 'Карта эскизов', b: 'trb', c: mid }] }]} />
    </Page>
  );
}

function T({ x, y, s = 13, children, rot }: { x: number; y: number; s?: number; children: React.ReactNode; rot?: boolean }) {
  return <text x={x} y={y} fontSize={s} fill="#333" stroke="none" transform={rot ? `rotate(-90 ${x} ${y})` : undefined}>{children}</text>;
}

function Ball({ x, y, n }: { x: number; y: number; n: string }) {
  return (
    <g>
      <circle cx={x} cy={y} r="7.500" fill="#fff" />
      <text x={x} y={y + 3.5} fontSize="10" fontStyle="normal" textAnchor="middle" fill="#333" stroke="none">{n}</text>
    </g>
  );
}

const arrowShape: Record<string, string> = { l: 'l10-1.500v3z', r: 'l-10-1.500v3z', u: 'l-1.800 9h3.600z', d: 'l-1.800-9h3.600z' };
const Arrow = ({ x, y, d }: { x: number; y: number; d: string }) => <path d={`M${x} ${y}${arrowShape[d]}`} fill="#000" stroke="none" />;

function CenterSketch() {
  return (
    <>
      <path d="M397 16l6 10 10-18h37" />
      <T x={414} y={22}>Ra 20</T>
      <T x={249} y={41} s={8}>2 центр. отв. А4</T>
      <T x={249} y={55} s={8}>ГОСТ 14034–74</T>
      <path d="M246 45.500h70.500L328 113l-14 5" />
      <Arrow x={313} y={118} d="l" />
      {[140, 284].map(x => (
        <g key={x}>
          <path d={`M${x} 61v11M${x - 3} 72.500h6l-3 5z`} />
          <path d={`M${x} 158l-4 9h8zM${x - 8} 167.500h16M${x - 21} 162l3 5h6l3-5`} />
        </g>
      ))}
      <path d="M93 77.500H211C204 97 207 107 211 120S215 145 211 158.500H93M313 77.500H219C212 97 215 107 219 120S223 145 219 158.500H313" />
      <path d="M93 77v82M313 77v82" stroke="#111" strokeWidth="1.500" />
      <path d="M89 118H316" strokeDasharray="24 3 3 3" stroke="#999" />
      <path d="M93 104c8-2 14 2 20 6 6 5 5 10 1 15-6 6-14 7-21 5M95 109l5-5M100 112l7-6M106 114l7-4M98 129l4-6M105 129l8-8M313 105c-8 2-12 2-18 3-8 4-9 14-2 20 6 3 13 4 20 6M296 113l6-6M302 113l7-7M298 129l4-7M305 131l5-5M290 121l3-8" />
      <path d="M93 110l8 4h8l2.500 4-2.500 4h-8l-8 4.500M101 114v8M109 114v8M313 110l-8 4h-8l-2.500 4 2.500 4h8l8 4.500M305 114v8M297 114v8" stroke="#111" strokeWidth="1.300" />
      <path d="M220 109.500h41l10 8M267 113.500h30M267 122.500h30M271 100v14M271 122v14" />
      <Arrow x={271} y={113} d="d" />
      <Arrow x={271} y={123} d="u" />
      <T x={226} y={104}>Ø4</T>
      <T x={244} y={96} s={8}>+0,3</T>
      <Ball x={271} y={143} n="2" />
      <path d="M313 110l42-25M313 127l42 24M352 87c12 20 12 44 0 63" />
      <path d="M352 87l5 7-3 1.500zM352 150l5-7-3-1.500z" fill="#000" stroke="none" />
      <T x={356} y={127} rot>60°</T>
      <Ball x={345} y={76} n="3" />
      <path d="M93 158v76M313 158v76M295 122v82M305 126v78" />
      <path d="M232 200.500h63M295 200.500h18M313 200.500h60M93 230.500h235" />
      <Arrow x={295} y={200.5} d="r" />
      <Arrow x={313} y={200.5} d="l" />
      <circle cx="305" cy="200.500" r="1.500" fill="#000" stroke="none" />
      <Arrow x={93} y={230.5} d="l" />
      <Arrow x={313} y={230.5} d="r" />
      <T x={249} y={194}>5</T>
      <T x={257} y={187} s={8}>+0,3</T>
      <T x={329} y={194}>3,9</T>
      <T x={348} y={187} s={8}>+0,3</T>
      <T x={184} y={225}>569±1,5</T>
      <Ball x={232} y={200} n="4" />
      <Ball x={379} y={200} n="5" />
      <Ball x={328} y={230} n="1" />
    </>
  );
}

function TurningSketch() {
  return (
    <>
      <path d="M430 18l7 10 10-19h43" />
      <T x={450} y={24}>Ra 20</T>
      <T x={272} y={72}>142±0,5</T>
      <path d="M184 74v38M400 74v45M184 78.500h230" />
      <Arrow x={184} y={78.5} d="l" />
      <Arrow x={400} y={78.5} d="r" />
      <Ball x={422} y={78} n="2" />
      <path d="M233 107l7 11 11-18.500h50" />
      <T x={253} y={113}>Ra 10,0</T>
      <path d="M55 112.500H101C93 135 97 148 102 160S107 190 101 202.500H55zM184 112.500H117C109 135 113 148 118 160S123 190 117 202.500H184" />
      <path d="M184 112v91" stroke="#111" strokeWidth="1.500" />
      <path d="M307 118c-8 20-3 35 1 45s3 23-1 34M316 118c-6 20-1 35 3 45s3 23-3 34" />
      <path d="M184 118.500H307M184 197.500H307M316 118.500h80l4 3.500M316 197.500h80l4-3.500M396 118v79" stroke="#111" strokeWidth="1.500" />
      <path d="M400 118v79" />
      <path d="M50 157.500H400" strokeDasharray="42 4 4 4" />
      <path d="M401 157.500l9-6M401 157.500l9 6" />
      <circle cx="407" cy="157.500" r="3" />
      <path d="M362 118v90" />
      <Arrow x={362} y={119} d="u" />
      <Arrow x={362} y={197} d="d" />
      <Ball x={362} y={215} n="1" />
      <T x={352} y={184} rot>Ø35,7</T>
      <T x={357} y={149} s={8} rot>-0,25</T>
      <path d="M396 197v35M400 197v35M381 228.500h76" />
      <Arrow x={396} y={228.5} d="r" />
      <Arrow x={400} y={228.5} d="l" />
      <Ball x={466} y={228} n="3" />
      <T x={407} y={222}>1,6×45°</T>
      <path d="M44 110v22M44 114l11 8-11 7M76 90v22M72.500 107h7l-3.500 5zM65 101.500h5l5 11M87 101.500h-5l-5 11" />
      <T x={67} y={97} s={7}>3</T>
    </>
  );
}

/* ---------- status bar ---------- */

function StatusBar() {
  return (
    <footer className="flex h-[22px] shrink-0 items-center bg-[#f5f6f7] text-[11px] text-[#333]">
      <button className="ml-3">Страница 2 из 17</button>
      <button className="ml-[18px]">Число слов: 1395</button>
      <button aria-label="Правописание" className="ml-[18px]">
        <Svg w={14} h={14}><path d="M7 12H.5V1H5l1.500 1L8 1h4.500v5M6.500 2v10M8 8l5 5M13 8l-5 5" stroke="#333" /></Svg>
      </button>
      <button className="ml-[18px]">русский</button>
      <button className="ml-[18px] flex items-center gap-[3px] text-[#222]">
        <Svg w={14} h={14}><circle cx="6" cy="2" r="1.500" stroke="#333" /><path d="M1 3l3 2v3l-2 5M10 3L8 5v2M4 5h4M5 8l2 5M10 8c3-2 4 1 1 3v1M11 13v1" stroke="#333" /></Svg>
        Специальные возможности: не поддерживаются
      </button>
      <button className="ml-auto flex items-center gap-[3px] text-[#222]">
        <Svg w={14} h={13}><path d="M3 .5H.5V3M11 .5h2.500V3M3 12.500H.5V10M11 12.500h2.500V10M4 2.500h4l2 2v6H4zM8 2.500v2h2" stroke="#333" /></Svg>
        Фокусировка
      </button>
      <button aria-label="Режим чтения" className="ml-3 flex h-full w-10 items-center justify-center">
        <Svg w={14} h={12}><path d="M.5 1.500H6l1 1 1-1h5.500v9H8l-1 1-1-1H.5zM7 2.500v9M2 4h3M2 6h3M2 8h3M9 4h3M9 6h3M9 8h3" stroke="#333" /></Svg>
      </button>
      <button aria-label="Разметка страницы" className="flex h-full w-10 items-center justify-center bg-[#dedede]">
        <Svg w={11} h={13}><path d="M.5 .5h10v12H.5zM2.500 3.500h6M2.500 5.500h6M2.500 7.500h6M2.500 9.500h6" stroke="#333" /></Svg>
      </button>
      <button aria-label="Веб-документ" className="flex h-full w-10 items-center justify-center">
        <Svg w={14} h={14}><path d="M5 12.500H.5V.5h11V5M2.500 3.500h7M2.500 5.500h4M2.500 7.500h3M2.500 9.500h2" stroke="#333" /><circle cx="9.500" cy="9.500" r="4" stroke="#333" /><path d="M5.500 9.500h8M9.500 5.500v8" stroke="#333" /></Svg>
      </button>
      <button aria-label="Уменьшить" className="ml-[6px]"><Svg w={8} h={8}><path d="M0 4.500h8" stroke="#333" /></Svg></button>
      <span className="relative ml-1.5 mr-1 flex h-4 w-[100px] items-center">
        <span className="h-px w-full bg-[#777]" />
        <span className="absolute left-1/2 top-1.5 h-1 w-px bg-[#777]" />
        <span className="absolute left-[22%] top-0.5 h-3 w-1 bg-[#666]" />
        <input aria-label="Масштаб" type="range" defaultValue={24} className="absolute inset-0 w-full opacity-0" />
      </span>
      <button aria-label="Увеличить"><Svg w={8} h={8}><path d="M0 4.500h8M4.500 0v8" stroke="#333" /></Svg></button>
      <button className="ml-3 mr-3.5 w-6 whitespace-nowrap">50 %</button>
    </footer>
  );
}

function TaskBar() {
  return (
    <div className="flex h-2 shrink-0 gap-[3px] overflow-hidden bg-linear-to-r from-[#22333d] to-[#192440] pl-[52px] pt-px">
      {[0, 1, 2, 3, 4].map(i => (
        <button key={i} aria-label={`Окно ${i + 1}`} className={clsx('h-3 w-[46px] border', i === 4 ? 'border-[#dfe3e4] bg-[#75838a]' : 'border-[#71818a] bg-[#46565f]')} />
      ))}
      <span className="ml-auto mr-[78px] pt-1 text-[10px] leading-3 text-white">15:23</span>
    </div>
  );
}

export default function App() {
  return (
    <div className={clsx('flex h-screen flex-col overflow-hidden bg-[#efefef]', UI)}>
      <TitleBar />
      <Tabs />
      <Ribbon />
      <Ruler />
      <div className="flex min-h-0 flex-1">
        <VerticalRuler />
        <main className="flex min-w-0 flex-1 flex-wrap content-start justify-center gap-x-2 gap-y-[7px] overflow-hidden px-20 pt-2">
          <TitlePage />
          <RoutePage />
          <OperationPage d={op005} />
          <SketchPage no="3" code="2014000001" opNo="005"><CenterSketch /></SketchPage>
          <OperationPage d={op010} />
          <SketchPage no="5" code="2014000002" opNo="010"><TurningSketch /></SketchPage>
          {[7, 8, 9].map(n => <article key={n} className="h-[396px] w-[561px] shrink-0 border border-[#c6c6c6] bg-white" />)}
        </main>
        <div className="flex w-[17px] shrink-0 flex-col items-center pt-[5px] pb-1">
          <Svg w={9} h={6}><path d="M0 6l4.500-6L9 6z" fill="#666" stroke="none" /></Svg>
          <div className="mt-[7px] h-[262px] w-2 rounded-full bg-[#666]" />
          <div className="mt-auto"><Svg w={9} h={7}><path d="M0 0l4.500 7L9 0z" fill="#666" stroke="none" /></Svg></div>
        </div>
      </div>
      <StatusBar />
      <TaskBar />
    </div>
  );
}
